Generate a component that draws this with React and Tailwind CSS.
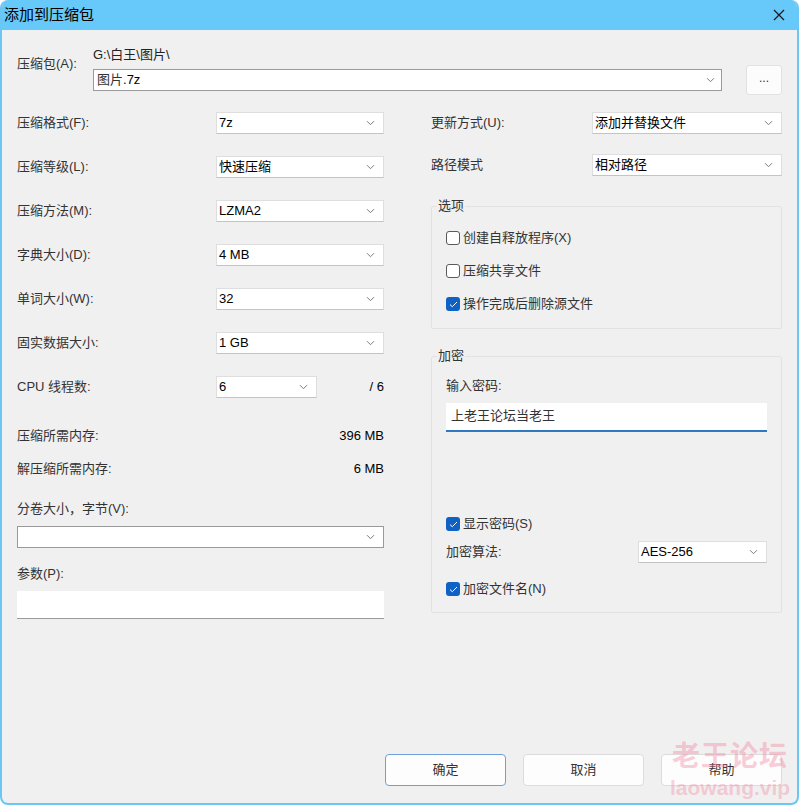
import React from 'react';

const Chevron = () => (
  <svg width="9" height="6" viewBox="0 0 9 6" className="shrink-0">
    <path d="M1 1.2l3.5 3.5L8 1.2" fill="none" stroke="#7a7a7a" strokeWidth="1" />
  </svg>
);

// combo box like the Win32 ones
const Select = ({ value, className = '' }) => (
  <div
    className={`flex h-[22px] items-center justify-between border border-[#dedede] border-b-[#c4c4c4] bg-white pl-[2px] pr-[8px] text-[13px] text-black ${className}`}
  >
    <span>{value}</span>
    <Chevron />
  </div>
);

const Check = ({ checked }) =>
  checked ? (
    <span className="flex h-[14px] w-[14px] items-center justify-center rounded-[3px] bg-[#0f62c4]">
      <svg width="9" height="7" viewBox="0 0 9 7">
        <path d="M1 3.6l2.3 2.1L8 1" fill="none" stroke="#fff" strokeWidth="1" />
      </svg>
    </span>
  ) : (
    <span className="h-[14px] w-[14px] rounded-[3px] border border-[#5a5a5a] bg-white" />
  );

const CheckRow = ({ checked, label }) => (
  <div className="flex h-[16px] items-center gap-[3px] text-[13px] text-[#333]">
    <Check checked={checked} />
    <span>{label}</span>
  </div>
);

const Row = ({ label, children }) => (
  <div className="flex h-[22px] items-center">
    <span className="w-[199px] text-[13px] text-[#333]">{label}</span>
    {children}
  </div>
);

const Button = ({ label, focused }) => (
  <button
    className={`h-[32px] w-[121px] rounded-[4px] border bg-[#fdfdfd] text-[13px] text-[#333] ${
      focused ? 'border-[#6f9fd8]' : 'border-[#dcdcdc]'
    }`}
  >
    {label}
  </button>
);

export default function App() {
  return (
    <div className="h-[805px] w-[800px] bg-white font-['Liberation_Sans','Noto_Sans_CJK_SC',sans-serif]">
      <div className="relative flex h-[805px] w-[799px] flex-col overflow-hidden rounded-[8px] border-2 border-t-0 border-[#6ac6f5] bg-[#f0f0f0]">
        {/* Title bar */}
        <div className="flex h-[30px] shrink-0 items-center justify-between bg-[#67c8fa] pl-[2px] pr-[12px]">
          <span className="text-[15px] text-black">添加到压缩包</span>
          <svg width="12" height="12" viewBox="0 0 12 12">
            <path d="M1 1l10 10M11 1L1 11" stroke="#1c1c1c" strokeWidth="1.3" />
          </svg>
        </div>

        <div className="flex flex-1 flex-col px-[15px]">
          {/* Archive path */}
          <div className="mt-[17px] flex">
            <span className="w-[76px] pt-[9px] text-[13px] leading-[16px] text-[#333]">压缩包(A):</span>
            <div className="flex flex-1 flex-col">
              <span className="h-[16px] text-[13px] leading-[16px] text-[#222]">G:\白王\图片\</span>
              <div className="mt-[2px] flex h-[30px] items-center">
                <div className="flex h-[22px] w-[629px] items-center justify-between border border-[#9a9a9a] bg-white pl-[3px] pr-[6px] text-[13px]">
                  <span className="text-[#333]">
                    图片<span className="text-black">.7z</span>
                  </span>
                  <Chevron />
                </div>
                <div className="ml-[24px] flex h-[30px] w-[36px] items-center justify-center rounded-[3px] border border-[#e2e2e2] bg-[#fcfcfc] pb-[4px] text-[12px] text-[#333]">
                  ...
                </div>
              </div>
            </div>
          </div>

          <div className="flex gap-[47px]">
            {/* Left column */}
            <div className="flex w-[367px] flex-col">
              <div className="mt-[17px] flex flex-col gap-[22px]">
                <Row label="压缩格式(F):"><Select value="7z" className="w-[168px]" /></Row>
                <Row label="压缩等级(L):"><Select value="快速压缩" className="w-[168px] text-[#555]" /></Row>
                <Row label="压缩方法(M):"><Select value="LZMA2" className="w-[168px]" /></Row>
                <Row label="字典大小(D):"><Select value="4 MB" className="w-[168px]" /></Row>
                <Row label="单词大小(W):"><Select value="32" className="w-[168px]" /></Row>
                <Row label="固实数据大小:"><Select value="1 GB" className="w-[168px]" /></Row>
                <Row label="CPU 线程数:">
                  <Select value="6" className="w-[101px]" />
                  <span className="ml-auto text-[13px] text-black">/ 6</span>
                </Row>
              </div>

              <div className="mt-[30px] flex h-[16px] items-center justify-between text-[13px]">
                <span className="text-[#333]">压缩所需内存:</span>
                <span className="text-black">396 MB</span>
              </div>
              <div className="mt-[17px] flex h-[16px] items-center justify-between text-[13px]">
                <span className="text-[#333]">解压缩所需内存:</span>
                <span className="text-black">6 MB</span>
              </div>

              <span className="mt-[24px] h-[16px] text-[13px] leading-[16px] text-[#333]">分卷大小，字节(V):</span>
              <div className="mt-[9px] flex h-[22px] items-center justify-end border border-[#9a9a9a] bg-white pr-[8px]">
                <Chevron />
              </div>

              <span className="mt-[18px] h-[16px] text-[13px] leading-[16px] text-[#333]">参数(P):</span>
              <div className="mt-[9px] h-[28px] border-b border-[#9a9a9a] bg-white" />
            </div>

            {/* Right column */}
            <div className="flex w-[351px] flex-col">
              <div className="mt-[17px] flex h-[22px] items-center">
                <span className="w-[161px] text-[13px] text-[#333]">更新方式(U):</span>
                <Select value="添加并替换文件" className="flex-1 text-[#333]" />
              </div>
              <div className="mt-[20px] flex h-[22px] items-center">
                <span className="w-[161px] text-[13px] text-[#333]">路径模式</span>
                <Select value="相对路径" className="flex-1 text-[#333]" />
              </div>

              <fieldset className="mt-[22px] h-[131px] rounded-[2px] border border-[#e2e2e2] px-[14px] pt-[16px]">
                <legend className="ml-[-9px] px-[1px] text-[13px] leading-[16px] text-[#333]">选项</legend>
                <div className="flex flex-col gap-[17px]">
                  <CheckRow label="创建自释放程序(X)" />
                  <CheckRow label="压缩共享文件" />
                  <CheckRow checked label="操作完成后删除源文件" />
                </div>
              </fieldset>

              <fieldset className="mt-[19px] h-[265px] rounded-[2px] border border-[#e2e2e2] px-[14px] pt-[14px]">
                <legend className="ml-[-9px] px-[1px] text-[13px] leading-[16px] text-[#333]">加密</legend>
                <div className="flex flex-col">
                  <span className="h-[16px] text-[13px] leading-[16px] text-[#333]">输入密码:</span>
                  <div className="mt-[9px] flex h-[29px] items-start border-b-2 border-[#2f78c2] bg-white pl-[5px] pt-[3px] text-[13px] text-[#333]">
                    上老王论坛当老王
                  </div>
                  <div className="mt-[84px]">
                    <CheckRow checked label="显示密码(S)" />
                  </div>
                  <div className="mt-[9px] flex h-[22px] items-center">
                    <span className="w-[192px] text-[13px] text-[#333]">加密算法:</span>
                    <Select value="AES-256" className="flex-1" />
                  </div>
                  <div className="mt-[18px]">
                    <CheckRow checked label="加密文件名(N)" />
                  </div>
                </div>
              </fieldset>
            </div>
          </div>

          {/* Buttons */}
          <div className="mt-auto mb-[17px] flex justify-end gap-[17px]">
            <Button label="确定" focused />
            <Button label="取消" />
            <Button label="帮助" />
          </div>
        </div>

        {/* watermark */}
        <div className="pointer-events-none absolute left-[668px] top-[743px] flex flex-col items-center leading-none">
          <span className="text-[28px] font-bold tracking-[1px] text-[#f07f9c]/40">老王论坛</span>
          <span className="mt-[6px] text-[21px] font-bold text-[#f07f9c]/35">laowang.vip</span>
        </div>
      </div>
    </div>
  );
}
